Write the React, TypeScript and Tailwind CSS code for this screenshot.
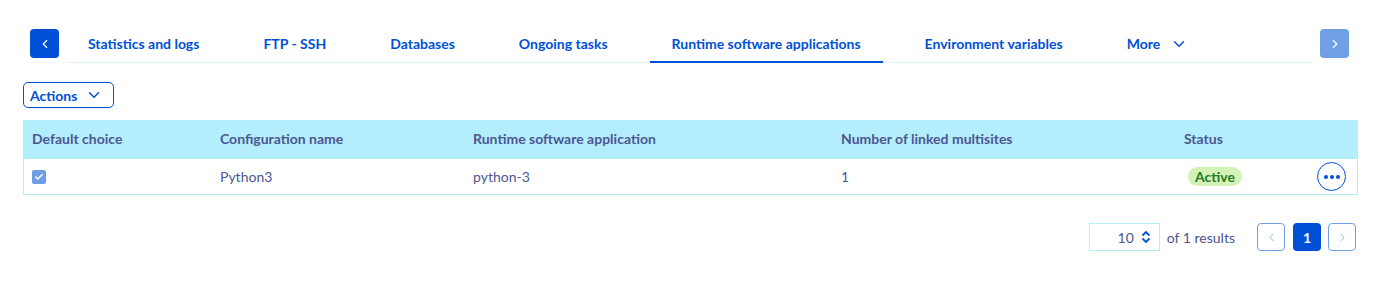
import { ChevronLeft, ChevronRight, ChevronDown, Check } from "lucide-react";

const tabs = [
    "Statistics and logs",
    "FTP - SSH",
    "Databases",
    "Ongoing tasks",
    "Runtime software applications",
    "Environment variables",
];

const cols = "grid grid-cols-[188px_253px_368px_343px_1fr_58px] items-center";

export default function App() {
    return (
        <div className="w-[1376px] h-[294px] bg-white font-['Lato','Liberation_Sans',sans-serif] text-[14px] pt-[29px]">
            {/* tab bar */}
            <div className="flex items-start pl-[30px] pr-[27px]">
                <button className="w-[29px] h-[29px] rounded-[4px] bg-[#0050d7] flex items-center justify-center text-white shrink-0">
                    <ChevronLeft size={14} strokeWidth={2} />
                </button>
                <div className="flex-1 ml-[7px] mr-[8px] flex gap-[20px] border-b border-[#e0f2fb] h-[34px]">
                    {tabs.map((t) => (
                        <div
                            key={t}
                            className={
                                "px-[22px] h-[33px] pb-[4px] flex items-center font-bold text-[#0050d7] " +
                                (t === "Runtime software applications" ? "border-b-2 border-[#0050d7] h-[34px]" : "")
                            }
                        >
                            {t}
                        </div>
                    ))}
                    <div className="px-[22px] h-[33px] pb-[4px] flex items-center gap-[10px] font-bold text-[#0050d7]">
                        More
                        <ChevronDown size={18} strokeWidth={2} />
                    </div>
                </div>
                <button className="w-[29px] h-[29px] rounded-[4px] bg-[#6fa0e6] flex items-center justify-center text-white shrink-0">
                    <ChevronRight size={14} strokeWidth={2} />
                </button>
            </div>

            <div className="px-[23px] pr-[18px]">
                {/* actions */}
                <button className="mt-[19px] h-[26px] w-[91px] border border-[#0050d7] rounded-[5px] flex items-center pl-[6px] gap-[8px] font-bold text-[#0050d7]">
                    Actions
                    <ChevronDown size={18} strokeWidth={2} />
                </button>

                {/* table */}
                <div className="mt-[12px] border border-[#b3eefd]">
                    <div className={cols + " h-[38px] pb-[3px] bg-[#b3eefd] font-bold text-[#4d5693]"}>
                        <div className="pl-[8px]">Default choice</div>
                        <div className="pl-[8px]">Configuration name</div>
                        <div className="pl-[8px]">Runtime software application</div>
                        <div className="pl-[8px]">Number of linked multisites</div>
                        <div className="pl-[8px]">Status</div>
                        <div />
                    </div>
                    <div className={cols + " h-[35px] text-[#4d5693]"}>
                        <div className="pl-[8px]">
                            <span className="w-[14px] h-[14px] rounded-[2px] bg-[#6d9ee5] flex items-center justify-center text-white">
                                <Check size={10} strokeWidth={3.5} />
                            </span>
                        </div>
                        <div className="pl-[8px]">Python3</div>
                        <div className="pl-[8px]">python-3</div>
                        <div className="pl-[8px]">1</div>
                        <div className="pl-[12px]">
                            <span className="inline-flex items-center h-[19px] px-[7px] rounded-full bg-[#d4f2b8] text-[#1f7a22] font-bold">
                                Active
                            </span>
                        </div>
                        <div className="flex justify-start pl-[18px]">
                            <button className="w-[29px] h-[29px] rounded-full border border-[#0050d7] flex items-center justify-center gap-[2px]">
                                <span className="w-[4px] h-[4px] rounded-full bg-[#0050d7]" />
                                <span className="w-[4px] h-[4px] rounded-full bg-[#0050d7]" />
                                <span className="w-[4px] h-[4px] rounded-full bg-[#0050d7]" />
                            </button>
                        </div>
                    </div>
                </div>

                {/* pagination */}
                <div className="mt-[28px] flex items-center justify-end pr-[2px]">
                    <div className="w-[71px] h-[28px] border border-[#b3eefd] flex items-center justify-end pr-[8px] gap-[7px] text-[#4d5693]">
                        10
                        <svg width="10" height="14" viewBox="0 0 10 14" fill="none" stroke="#0050d7" strokeWidth="1.8">
                            <path d="M1.5 5.5 L5 2 L8.5 5.5" />
                            <path d="M1.5 8.5 L5 12 L8.5 8.5" />
                        </svg>
                    </div>
                    <span className="ml-[7px] text-[#4d5693]">of 1 results</span>
                    <button className="ml-[22px] w-[28px] h-[28px] rounded-[4px] border border-[#6fa0e6] flex items-center justify-center text-[#6fa0e6]">
                        <ChevronLeft size={13} strokeWidth={1.5} />
                    </button>
                    <button className="ml-[8px] w-[28px] h-[28px] rounded-[4px] bg-[#0050d7] flex items-center justify-center text-white font-bold">
                        1
                    </button>
                    <button className="ml-[7px] w-[28px] h-[28px] rounded-[4px] border border-[#6fa0e6] flex items-center justify-center text-[#6fa0e6]">
                        <ChevronRight size={13} strokeWidth={1.5} />
                    </button>
                </div>
            </div>
        </div>
    );
}
